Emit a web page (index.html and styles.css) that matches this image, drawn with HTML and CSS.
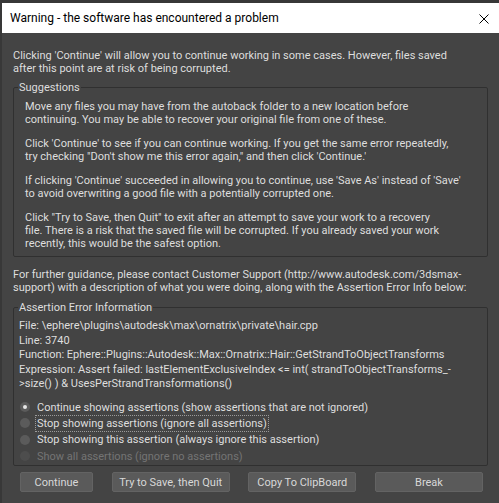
FILE: index.html
```html
<!DOCTYPE html>
<html>
<head>
    <title>Warning - the software has encountered a problem</title>
    <link rel="stylesheet" href="styles.css">
</head>
<body>
    <div class="dialog">
        <div class="titlebar">
            <span class="title">Warning - the software has encountered a problem</span>
            <svg class="close" width="10" height="10" viewBox="0 0 10 10">
                <path d="M0.5 0.5 L9.5 9.5 M9.5 0.5 L0.5 9.5" stroke="#000" stroke-width="1" fill="none" />
            </svg>
        </div>

        <div class="content">
            <p class="text intro">Clicking 'Continue' will allow you to continue working in some cases. However, files saved<br>after this point are at risk of being corrupted.</p>

            <fieldset class="group">
                <legend>Suggestions</legend>
                <div class="suggestions">
                    <p>Move any files you may have from the autoback folder to a new location before<br>continuing. You may be able to recover your original file from one of these.</p>
                    <p>Click 'Continue' to see if you can continue working. If you get the same error repeatedly,<br>try checking "Don't show me this error again," and then click 'Continue.'</p>
                    <p>If clicking 'Continue' succeeded in allowing you to continue, use 'Save As' instead of 'Save'<br>to avoid overwriting a good file with a potentially corrupted one.</p>
                    <p>Click "Try to Save, then Quit" to exit after an attempt to save your work to a recovery<br>file. There is a risk that the saved file will be corrupted. If you already saved your work<br>recently, this would be the safest option.</p>
                </div>
            </fieldset>

            <p class="text guidance">For further guidance, please contact Customer Support (http://www.autodesk.com/3dsmax-<br>support) with a description of what you were doing, along with the Assertion Error Info below:</p>

            <fieldset class="group">
                <legend>Assertion Error Information</legend>
                <div class="assert-info">
                    <div>File: \ephere\plugins\autodesk\max\ornatrix\private\hair.cpp</div>
                    <div>Line: 3740</div>
                    <div>Function: Ephere::Plugins::Autodesk::Max::Ornatrix::Hair::GetStrandToObjectTransforms</div>
                    <div>Expression: Assert failed: lastElementExclusiveIndex &lt;= int( strandToObjectTransforms_-<br>&gt;size() ) &amp; UsesPerStrandTransformations()</div>
                </div>
                <div class="options">
                    <label class="option checked"><span class="radio"></span><span class="label">Continue showing assertions (show assertions that are not ignored)</span></label>
                    <label class="option focused"><span class="radio"></span><span class="label">Stop showing assertions (ignore all assertions)</span></label>
                    <label class="option"><span class="radio"></span><span class="label">Stop showing this assertion (always ignore this assertion)</span></label>
                    <label class="option disabled"><span class="radio"></span><span class="label">Show all assertions (ignore no assertions)</span></label>
                </div>
            </fieldset>

            <div class="buttons">
                <button class="btn btn-continue">Continue</button>
                <button class="btn btn-save">Try to Save, then Quit</button>
                <button class="btn btn-copy">Copy To ClipBoard</button>
                <button class="btn btn-break">Break</button>
            </div>
        </div>
    </div>
</body>
</html>
```

FILE: styles.css
```css
body {
    margin: 0;
    background: #444444;
    font-family: Roboto, "Noto Sans", sans-serif;
    font-size: 11px;
}

.dialog {
    height: 500px;
    border-top: 3px solid #383838;
    border-left: 2px solid #383838;
    background: #444444;
    color: #dedede;
}

.titlebar {
    height: 30px;
    background: #ffffff;
    display: flex;
    align-items: center;
    justify-content: space-between;
    padding: 0 10px 0 8px;
}
.title {
    color: #000000;
    font-size: 12px;
}
.close { margin-top: 1px; }

.content {
    padding: 16px 11px 0 11px;
}

.text {
    margin: 0;
    line-height: 13px;
    white-space: nowrap;
}
.intro { margin-bottom: 6px; }
.guidance { margin: 11px 0 7px 0; }

.group {
    margin: 0;
    padding: 0;
    border: 1px solid #303030;
    border-radius: 2px;
    min-width: 0;
}
.group legend {
    margin-left: 4px;
    padding: 0 1px;
    line-height: 13px;
}

.suggestions {
    padding: 6px 11px 6px 11px;
    line-height: 13px;
    white-space: nowrap;
}
.suggestions p { margin: 0 0 11px 0; }
.suggestions p:last-child { margin-bottom: 0; }

.assert-info {
    padding: 5px 5px 0 5px;
    line-height: 14.6px;
    white-space: nowrap;
}

.options {
    padding: 7px 0 1px 6px;
}
.option {
    display: flex;
    align-items: center;
    height: 16.3px;
    white-space: nowrap;
}
.radio {
    width: 10px;
    height: 10px;
    border-radius: 50%;
    background: #5b5b5b;
    margin-right: 7px;
    display: flex;
    align-items: center;
    justify-content: center;
}
.option.checked .radio::after {
    content: "";
    width: 4px;
    height: 4px;
    border-radius: 50%;
    background: #e6e6e6;
}
.option.focused .label {
    outline: 1px dotted #9a9a9a;
    outline-offset: 1px;
}
.option.disabled { color: #747474; }
.option.disabled .radio { background: #4d4d4d; }

.buttons {
    display: flex;
    justify-content: space-between;
    padding: 6px 5px 0 7px;
}
.btn {
    height: 20px;
    padding: 0;
    background: #5a5a5a;
    color: #d8d8d8;
    border: 1px solid #636363;
    border-radius: 2px;
    font-family: inherit;
    font-size: 11px;
}
.btn-continue { width: 73px; }
.btn-save { width: 118px; }
.btn-copy { width: 108px; }
.btn-break { width: 108px; }
```
